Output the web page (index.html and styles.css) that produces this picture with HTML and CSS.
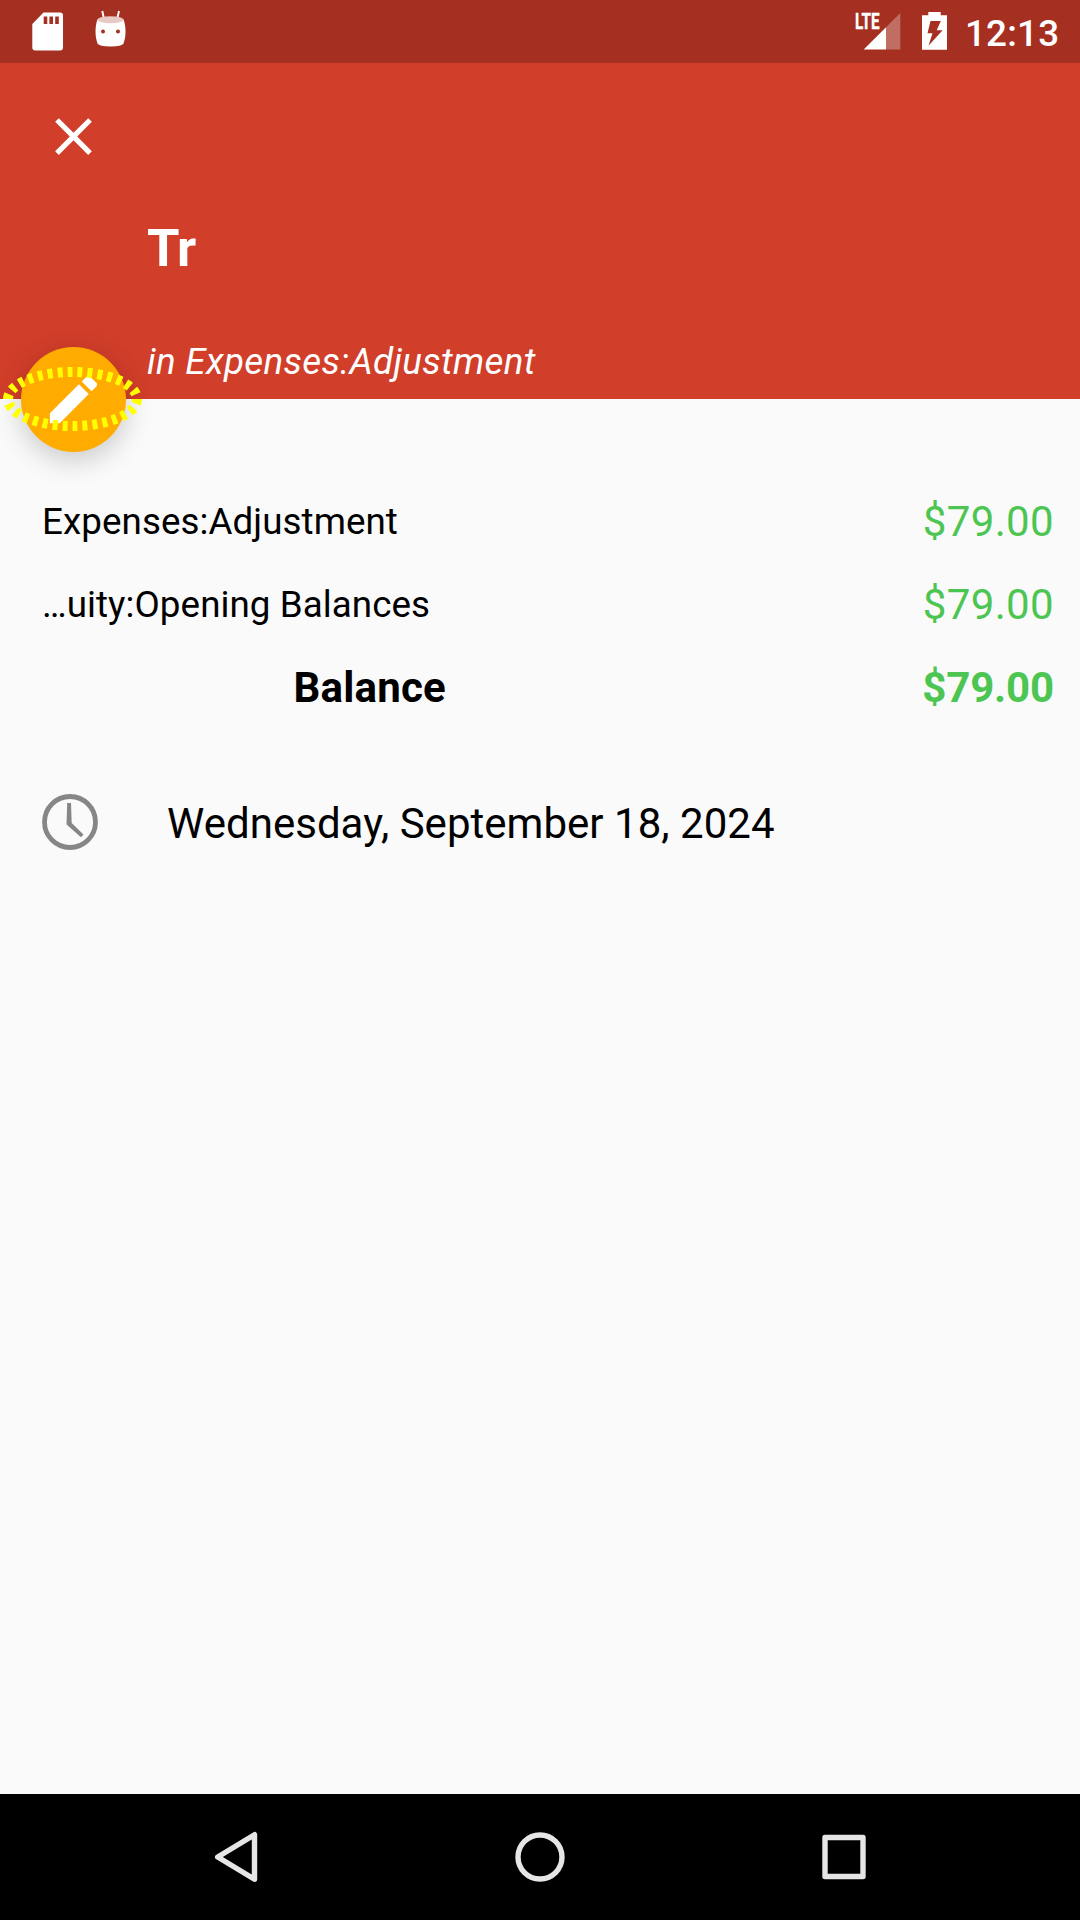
FILE: index.html
```html
<!DOCTYPE html>
<html lang="en">
<head>
<meta charset="utf-8">
<title>Transaction</title>
<link rel="stylesheet" href="styles.css">
</head>
<body>
<div class="screen">
  <div class="status">
    <svg class="notifications" width="140" height="63" viewBox="0 0 140 63">
      <path fill="#fff" fill-rule="evenodd" d="M43.500 12.500H60a3 3 0 0 1 3 3V47.500a3 3 0 0 1-3 3H35.300a3 3 0 0 1-3-3V24ZM43.700 16.500V24H47.300V16.500ZM49.400 16.500V24H53V16.500ZM55.200 16.500V24H58.800V16.500Z"/>
      <path stroke="#fff" stroke-width="1.900" d="M102.300 11L104 19M119 11L117.200 19"/>
      <path fill="#fff" d="M97.300 19.500C95 27 94.800 36 97.500 43.500Q99 46.300 110.500 46.500Q122 46.300 123.500 43.500C126.300 36 126 27 123.700 19.500Z"/>
      <ellipse cx="110.500" cy="19.700" rx="13" ry="3.500" fill="#e9c9c5"/>
      <circle cx="103" cy="31.600" r="2" fill="#a53021"/>
      <circle cx="118" cy="31.600" r="2" fill="#a53021"/>
    </svg>
    <div class="system">
      <svg width="100" height="63" viewBox="850 0 100 63">
        <text class="network" x="855" y="29" textLength="24.500" lengthAdjust="spacingAndGlyphs">LTE</text>
        <path fill="#fff" fill-opacity=".3" d="M886 27.200L900.300 13V49.500H886Z"/>
        <path fill="#fff" d="M886 27.200V49.500H863.700Z"/>
        <path fill="#fff" fill-rule="evenodd" d="M928.300 12H940.700V15.300H947V49.700H922V15.300H928.300ZM930.500 21L927.500 33.200H932.500L928.500 45.800L942.600 30.300H936.700L940.800 21Z"/>
      </svg>
      <span class="clock">12:13</span>
    </div>
  </div>
  <header class="header">
    <svg class="close" width="63" height="63" viewBox="0 0 24 24"><path fill="#fff" d="M19 6.410L17.590 5 12 10.590 6.410 5 5 6.410 10.590 12 5 17.590 6.410 19 12 13.410 17.590 19 19 17.590 13.410 12z"/></svg>
    <h1 class="title">Tr</h1>
    <p class="subtitle">in Expenses:Adjustment</p>
    <div class="fab">
      <svg width="63" height="63" viewBox="0 0 24 24"><path fill="#fff" d="M3 17.250V21h3.750L17.810 9.940l-3.750-3.750L3 17.250zM20.710 7.040c.39-.39.39-1.020 0-1.410l-2.340-2.340c-.39-.39-1.020-.39-1.410 0l-1.830 1.830 3.750 3.750 1.830-1.830z"/></svg>
    </div>
    <svg class="highlight" width="147" height="74" viewBox="0 0 147 74"><ellipse cx="72.500" cy="37" rx="64.500" ry="27" pathLength="300"/></svg>
  </header>
  <main class="content">
    <div class="row"><span class="account">Expenses:Adjustment</span><span class="amount">$79.00</span></div>
    <div class="row"><span class="account">…uity:Opening Balances</span><span class="amount">$79.00</span></div>
    <div class="row total"><span class="label">Balance</span><span class="amount">$79.00</span></div>
    <div class="date">
      <svg width="56" height="56" viewBox="0 0 56 56">
        <circle cx="28" cy="28" r="25.500" fill="none" stroke="#868686" stroke-width="4.800"/>
        <path fill="#868686" d="M25.200 9H29L29.700 29L41.500 40.500L39 43.200L24.500 30.500Z"/>
      </svg>
      <span>Wednesday, September 18, 2024</span>
    </div>
  </main>
  <nav class="nav">
    <svg width="1080" height="126" viewBox="0 1794 1080 126" fill="none" stroke="#e6e6e6" stroke-width="5.400" stroke-linejoin="round">
      <path d="M254.500 1834.700V1879.300L217.700 1857Z"/>
      <circle cx="540" cy="1857" r="22"/>
      <rect x="825" y="1837.500" width="38" height="39"/>
    </svg>
  </nav>
</div>
</body>
</html>
```
FILE: styles.css
```css
body {
  margin: 0;
  font-family: Roboto, sans-serif;
}

.screen {
  display: flex;
  flex-direction: column;
  width: 1080px;
  height: 1920px;
  background: #fafafa;
  color: #000;
  overflow: hidden;
}

svg {
  display: block;
  flex: none;
}

.status {
  display: flex;
  justify-content: space-between;
  height: 63px;
  background: #a53021;
  color: #fff;
}

.system {
  display: flex;
  width: 230px;
}

.network {
  font: 700 21.500px Roboto, sans-serif;
  fill: #fff;
  stroke: #fff;
  stroke-width: .4px;
}

.clock {
  margin-left: 15px;
  font-size: 36.750px;
  font-weight: 500;
  letter-spacing: .2px;
  line-height: 67px;
}

.header {
  position: relative;
  box-sizing: border-box;
  height: 336px;
  padding: 42px 42px 0;
  background: #d13e2a;
  color: #fff;
}

.title {
  margin: 49px 0 0 105px;
  font-size: 52.500px;
  font-weight: 700;
  letter-spacing: -.8px;
  line-height: 62px;
}

.subtitle {
  margin: 61px 0 0 105px;
  font-size: 36.750px;
  font-style: italic;
  letter-spacing: .33px;
  line-height: 43px;
}

.fab {
  position: absolute;
  left: 21px;
  top: 284px;
  width: 105px;
  height: 105px;
  display: flex;
  align-items: center;
  justify-content: center;
  border-radius: 50%;
  background: #ffab00;
  box-shadow: 0 8px 28px rgba(0, 0, 0, .2);
}

.highlight {
  position: absolute;
  left: 0;
  top: 299px;
  fill: none;
  stroke: #ff0;
  stroke-width: 10;
  stroke-dasharray: 5 5;
}

.content {
  flex: 1;
  padding: 81px 26px 0 42px;
}

.row {
  display: flex;
  align-items: center;
  justify-content: space-between;
  height: 83px;
}

.account {
  font-size: 36.750px;
  letter-spacing: .07px;
}

.amount {
  font-size: 42px;
  letter-spacing: .35px;
  color: #4cc552;
}

.total {
  font-size: 42px;
  font-weight: 700;
}

.label {
  width: 404px;
  letter-spacing: .2px;
  text-align: right;
}

.total .amount {
  letter-spacing: -.15px;
}

.date {
  display: flex;
  align-items: center;
  gap: 69px;
  margin-top: 65px;
  font-size: 42px;
  letter-spacing: .03px;
  line-height: 60px;
}

.date svg {
  margin-top: -4px;
}

.nav {
  height: 126px;
  background: #000;
}
```
